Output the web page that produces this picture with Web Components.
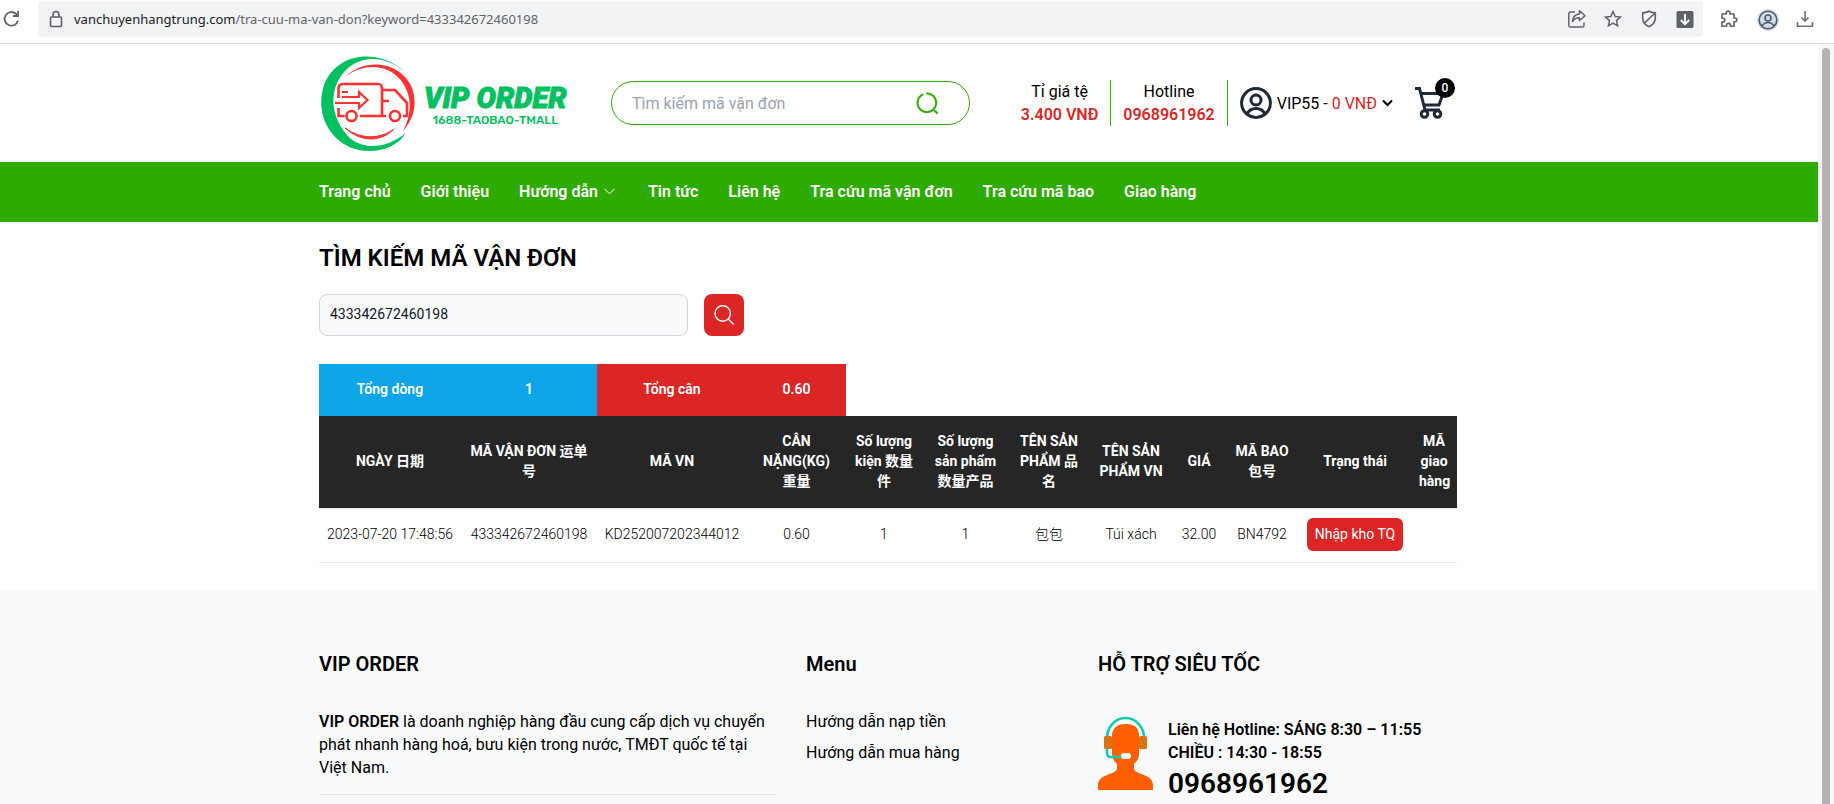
<!DOCTYPE html>
<html lang="vi">
<head>
<meta charset="utf-8">
<title>Tra cứu mã vận đơn - VIP ORDER</title>
<style>
html,body{margin:0;height:100%}
body{font-family:Roboto,"Noto Sans CJK SC",sans-serif;font-size:16px;line-height:23px;font-weight:400;color:#000;background:#fff;overflow:hidden;
--green:#2eab00;--red:#dc2626;--sky:#0ea5e9;--dark:#262626}
</style>
</head>
<body>
<browser-window>
  <browser-bar slot="bar"></browser-bar>
  <site-header></site-header>
  <site-nav></site-nav>
  <tracking-page></tracking-page>
  <site-footer></site-footer>
</browser-window>
<script>
const define = (name, html) => {
  const t = document.createElement('template');
  t.innerHTML = '<style>*,:host{box-sizing:border-box}button,input{font:inherit}:host{display:block}svg{display:block;flex:none}</style>' + html;
  customElements.define(name, class extends HTMLElement {
    constructor() {
      super();
      this.attachShadow({mode: 'open'}).append(t.content.cloneNode(true));
    }
  });
};

/* Window frame: toolbar on top, scrolling page with its scrollbar below */
define('browser-window', `
<style>
:host{display:flex;flex-direction:column;height:100vh;overflow:hidden}
.view{flex:1;min-height:0;display:flex}
.page{flex:1;min-width:0;overflow:hidden;display:flex;flex-direction:column}
::slotted(site-footer){flex:1 0 auto}
.scroll{width:16px;flex:none;background:#f8f8f8;padding:4px 4px 0}
.thumb{height:100%;border-radius:4px 4px 0 0;background:#b4b4b4}
</style>
<slot name="bar"></slot>
<div class="view"><div class="page"><slot></slot></div><div class="scroll"><div class="thumb"></div></div></div>`);

/* Centred content column */
define('page-container', `
<style>:host{padding-right:42px}div{max-width:1138px;margin:0 auto}</style>
<div><slot></slot></div>`);

define('browser-bar', `
<style>
:host{display:flex;align-items:center;height:44px;padding:0 19px 6px 0;border-bottom:1px solid #d9dadc;background:#fff;color:#5f6368;flex:none}
button{border:0;background:none;padding:0;color:inherit;display:grid;place-items:center;width:20px;height:20px}
.reload{width:20px;margin-right:18px}
.url{flex:1;height:36px;margin-top:1px;display:flex;align-items:center;background:#f1f3f5;border-radius:4px;padding:0 8px;gap:8px;margin-right:16px}
.lock{width:20px;display:grid;place-items:center}
.text{flex:1;white-space:nowrap;font-family:"Noto Sans",sans-serif;font-size:13px}
.text b{font-weight:400;color:#202124}
.acts{display:flex;gap:16px}
.ext{display:flex;gap:18px}
</style>
<button class="reload" aria-label="Reload"><svg width="20" height="20" viewBox="-2 0 20 20" fill="none" stroke="#5f6368" stroke-width="1.800"><path d="M16 11.500A6.800 6.800 0 1 1 14.200 5l1.600 1.700"/><path d="M16 2v5h-5"/></svg></button>
<div class="url">
  <span class="lock"><svg width="14" height="18" viewBox="0 0 14 18" fill="none" stroke="#5f6368" stroke-width="1.600"><rect x="1.500" y="7" width="11" height="9.500" rx="1.200"/><path d="M4 7V4.500a3 3 0 0 1 6 0V7"/></svg></span>
  <span class="text"><b>vanchuyenhangtrung.com</b>/tra-cuu-ma-van-don?keyword=433342672460198</span>
  <div class="acts">
    <button aria-label="Share"><svg width="20" height="20" viewBox="0 0 20 20" fill="none" stroke="#5f6368" stroke-width="1.500" stroke-linejoin="round"><path d="M8 3H3.400a1.600 1.600 0 0 0-1.600 1.600v11.800A1.600 1.600 0 0 0 3.400 18h12a1.600 1.600 0 0 0 1.600-1.600V13.500"/><path d="M12.500 1.800 18 6.800l-5.500 4.700V8.700c-3.500 0-5.500 1.300-7 3.800.3-4 2.700-7 7-7.400z"/></svg></button>
    <button aria-label="Bookmark"><svg width="20" height="20" viewBox="0 0 20 20" fill="none" stroke="#5f6368" stroke-width="1.500"><path d="m10 2.600 2.200 4.900 5.200.6-3.900 3.500 1.100 5.200L10 14.200l-4.600 2.600 1.100-5.200L2.600 8.100l5.200-.6z"/></svg></button>
    <button aria-label="Shield"><svg width="20" height="20" viewBox="0 0 20 20" fill="none" stroke="#5f6368" stroke-width="1.600"><path d="M10 2.200c2 1.200 4 1.600 6.300 1.700V9c0 4.200-2.600 7-6.300 8.700C6.300 16 3.700 13.200 3.700 9V3.900C6 3.800 8 3.400 10 2.200zM15.500 4.500l-10 9.500"/></svg></button>
    <button aria-label="Save page"><svg width="20" height="20" viewBox="0 0 20 20"><rect x="1.500" y="2" width="17" height="17" rx="1.500" fill="#5f6368"/><path d="M10 5v10M5.800 11l4.200 4.200 4.200-4.200" fill="none" stroke="#fff" stroke-width="1.800"/></svg></button>
  </div>
</div>
<div class="ext">
  <button aria-label="Extensions"><svg width="20" height="20" viewBox="0 0 20 20" fill="none" stroke="#5f6368" stroke-width="1.600" stroke-linejoin="round"><path d="M3 5h4.300V4a1.800 1.800 0 0 1 3.700 0v1h4v4h1a1.800 1.800 0 0 1 0 3.700h-1v4.500h-3.600v-.9a1.900 1.900 0 0 0-3.800 0v.9H3v-4.100h.9a1.900 1.900 0 0 0 0-3.800H3z"/></svg></button>
  <button aria-label="Profile"><svg width="22" height="22" viewBox="0 0 22 22"><circle cx="11" cy="11" r="11" fill="#d5dbe3"/><g fill="none" stroke="#4a5a74" stroke-width="1.600"><circle cx="11" cy="11" r="8.800"/><circle cx="11" cy="9" r="3"/><path d="M5 17c1.500-2.500 3.500-3.500 6-3.500s4.500 1 6 3.500"/></g></svg></button>
  <button aria-label="Downloads"><svg width="20" height="20" viewBox="0 0 20 20" fill="none" stroke="#6f7275" stroke-width="1.600"><path d="M10 2v10M6.500 8.500 10 12l3.500-3.500M2.500 13v4.200h15V13"/></svg></button>
</div>`);

define('site-logo', `
<style>
a{display:flex;align-items:center;gap:8px;text-decoration:none;color:#00c060}
span{display:block;text-align:center;white-space:nowrap}
.name{font:italic 900 29px/26px Roboto,sans-serif;-webkit-text-stroke:1px #00c060}
.sub{font:500 12px/18px Rubik,Roboto,sans-serif}
.words{padding-top:8px}
</style>
<a href="#" aria-label="VIP ORDER"><svg width="96" height="98" viewBox="0 0 96 98">
<path d="M85 18C58-7 16-1 4 31-7 65 16 97 49 97c16 0 29-6 37-18-20 16-45 18-59 2C9 60 9 33 26 16c15-15 39-15 59 2z" fill="#00c060"/>
<path d="M26 22C48 2 82 9 92 34c6 17 1 32-9 43 7-13 9-27 4-40C78 13 50 5 26 22z" fill="#ff3131"/>
<path d="M25 74c17 15 36 14 49 1-14 10-32 11-49-1z" fill="#ff3131" stroke="#ff3131"/>
<g fill="none" stroke="#ff3131" stroke-width="2.600">
<path d="M18.500 44V34a4 4 0 0 1 4-4H58a4 4 0 0 1 4 4v28H40M18.500 54v8h6M62 36h13l12 13v13h-4M66 62h-4M62 47h7"/>
<circle cx="31.500" cy="62" r="5"/><circle cx="75" cy="62" r="5"/>
<path d="M22 38h6M22 43h17v-5l8.500 8-8.500 8v-5H15" stroke-width="2.200"/></g>
</svg>
<div class="words"><span class="name">VIP ORDER</span><span class="sub">1688-TAOBAO-TMALL</span></div></a>`);

define('info-item', `
<style>
:host{height:46px;text-align:center;white-space:nowrap;border-right:1px solid var(--green);padding:0 12px}
b{display:block;font-weight:600;color:var(--red)}
</style>
<slot></slot><b><slot name="value"></slot></b>`);

define('site-header', `
<style>
:host{flex:none}
.row{display:flex;align-items:center;height:118px}
site-logo{width:291px;flex:none;margin-left:1px}
form{width:359px;height:44px;border:1px solid var(--green);border-radius:22px;display:flex;align-items:center;padding:0 30px 0 20px;margin:0}
input{flex:1;min-width:0;border:0;outline:0;background:none;padding:0;color:#000}
input::placeholder{color:#9ca3af;opacity:1}
button{border:0;background:none;padding:0;color:#000}
.info{display:flex;margin-left:auto}
.user{display:flex;align-items:center;gap:5px;margin-left:12px;white-space:nowrap}
.user i{font-style:normal;color:var(--red)}
.cart{position:relative;margin:0 12px 0 22px}
.badge{position:absolute;left:20px;top:-8px;width:20px;height:20px;border-radius:50%;background:#000;color:#fff;font-size:12px;line-height:20px;text-align:center;font-weight:500}
</style>
<page-container><div class="row">
<site-logo></site-logo>
<form onsubmit="return false"><input type="text" aria-label="Tìm kiếm mã vận đơn" placeholder="Tìm kiếm mã vận đơn">
<button aria-label="Tìm kiếm"><svg width="23" height="24" viewBox="0 0 23 24" fill="none" stroke="#2eab00" stroke-width="2" stroke-linecap="round"><path d="M11 2.500a9.300 9.300 0 1 1-4.500 1.100M19 20l2 2"/></svg></button></form>
<div class="info"><info-item>Tỉ giá tệ<span slot="value">3.400 VNĐ</span></info-item><info-item>Hotline<span slot="value">0968961962</span></info-item></div>
<button class="user"><svg width="32" height="32" viewBox="0 0 32 32" fill="none" stroke="#1f2937" stroke-width="3"><circle cx="16" cy="16" r="14.400"/><circle cx="16" cy="13" r="5"/><path d="M7 27c2-4 5-5.500 9-5.500s7 1.500 9 5.500"/></svg><span>VIP55 - <i>0 VNĐ</i></span><svg width="11" height="8" viewBox="0 0 11 8" fill="none" stroke="#000" stroke-width="2"><path d="m1 1.500 4.500 4.500L10 1.500"/></svg></button>
<button class="cart" aria-label="Giỏ hàng"><svg width="30" height="34" viewBox="0 0 30 34" fill="none" stroke="#1f2937" stroke-width="3"><path d="M0 2.500h4.500L10 24M6 7.500h22l-4 11.500H8M10 24h15"/><circle cx="9.500" cy="28" r="3.300"/><circle cx="22.500" cy="28" r="3.300"/></svg><span class="badge">0</span></button>
</div></page-container>`);

define('site-nav', `
<style>
:host{background:var(--green);flex:none}
nav{display:flex;gap:30px;height:60px;padding-bottom:2px;align-items:center}
a{color:#fff;text-decoration:none;font-weight:600;white-space:nowrap;display:flex;align-items:center;gap:6px}
</style>
<page-container><nav>
<a href="#">Trang chủ</a><a href="#">Giới thiệu</a><a href="#">Hướng dẫn<svg width="14" height="7" viewBox="0 0 14 7" fill="none" stroke="#fff"><path d="m.5.800 5 5 5-5"/></svg></a><a href="#">Tin tức</a><a href="#">Liên hệ</a><a href="#">Tra cứu mã vận đơn</a><a href="#">Tra cứu mã bao</a><a href="#">Giao hàng</a>
</nav></page-container>`);

define('tracking-page', `
<style>
:host{padding:20px 0 27px;flex:none}
h1{margin:0 0 20px;font-size:24px;line-height:32px;font-weight:600}
form{display:flex;gap:16px;margin:0 0 28px}
input{width:369px;height:42px;border:1px solid #d1d5db;border-radius:8px;background:#f9fafb;padding:0 10px 2px;font-size:14px;color:#111827;outline:0}
form button{width:40px;height:42px;border:0;border-radius:8px;background:var(--red);padding:0;display:grid;place-items:center}
table{width:100%;table-layout:fixed;border-collapse:collapse;font-size:14px;line-height:20px;text-align:center}
th,td{padding:0 8px 2px}
tr.sum{height:52px;color:#fff}
.sum th,.sum td{font-weight:600}
.sky{background:var(--sky)}.red{background:var(--red)}
tr.head{height:92px;background:var(--dark);color:#fff}
.head th{font-weight:700}
.data td{height:54px;padding:0 0 2px;font-weight:300;border-top:1px solid #e5e7eb;border-bottom:1px solid #e5e7eb}
.status{display:inline-block;border:0;border-radius:6px;background:var(--red);color:#fff;padding:0 8px;height:33px;font-size:14px;font-weight:400;white-space:nowrap}
</style>
<page-container>
<h1>TÌM KIẾM MÃ VẬN ĐƠN</h1>
<form onsubmit="return false"><input type="text" value="433342672460198" aria-label="Mã vận đơn"><button aria-label="Tìm kiếm"><svg width="20" height="20" viewBox="0 0 20 20" fill="none" stroke="#fff" stroke-width="1.400"><circle cx="8.700" cy="8.500" r="7.700"/><path d="m14.200 14 5.500 5.500"/></svg></button></form>
<table>
<colgroup><col style="width:142px"><col style="width:136px"><col style="width:150px"><col style="width:99px"><col style="width:76px"><col style="width:87px"><col style="width:80px"><col style="width:84px"><col style="width:52px"><col style="width:74px"><col style="width:112px"><col style="width:46px"></colgroup>
<thead>
<tr class="sum"><th class="sky">Tổng dòng</th><td class="sky">1</td><th class="red">Tổng cân</th><td class="red">0.60</td><td colspan="8"></td></tr>
<tr class="head"><th>NGÀY 日期</th><th>MÃ VẬN ĐƠN 运单号</th><th>MÃ VN</th><th>CÂN NẶNG(KG) 重量</th><th>Số lượng kiện 数量件</th><th>Số lượng sản phẩm 数量产品</th><th>TÊN SẢN PHẨM 品名</th><th>TÊN SẢN PHẨM VN</th><th>GIÁ</th><th>MÃ BAO 包号</th><th>Trạng thái</th><th>MÃ giao hàng</th></tr>
</thead>
<tbody><tr class="data"><td>2023-07-20 17:48:56</td><td>433342672460198</td><td>KD252007202344012</td><td>0.60</td><td>1</td><td>1</td><td>包包</td><td>Túi xách</td><td>32.00</td><td>BN4792</td><td><button class="status">Nhập kho TQ</button></td><td></td></tr></tbody>
</table>
</page-container>`);

define('footer-column', `
<style>h2{margin:0 0 32px;font-size:20px;line-height:28px;font-weight:600}</style>
<h2><slot name="title"></slot></h2><slot></slot>`);

define('site-footer', `
<style>
:host{background:#f9fafb;padding-top:60px}
.grid{display:grid;grid-template-columns:457fr 262fr 359fr;gap:30px}
p{margin:0;padding-bottom:15px;border-bottom:1px solid #e5e7eb}
p b,strong{font-weight:600}
.links{display:flex;flex-direction:column;gap:8px}
.links a{color:inherit;text-decoration:none}
.help{display:flex;gap:15px;padding-top:6px}
.help strong{display:block;padding-top:2px}
.tel{display:block;color:inherit;text-decoration:none;font-size:28px;line-height:40px;font-weight:600}
</style>
<page-container><div class="grid">
<footer-column><span slot="title">VIP ORDER</span><p><b>VIP ORDER</b> là doanh nghiệp hàng đầu cung cấp dịch vụ chuyển phát nhanh hàng hoá, bưu kiện trong nước, TMĐT quốc tế tại Việt Nam.</p></footer-column>
<footer-column><span slot="title">Menu</span><div class="links"><a href="#">Hướng dẫn nạp tiền</a><a href="#">Hướng dẫn mua hàng</a></div></footer-column>
<footer-column><span slot="title">HỖ TRỢ SIÊU TỐC</span><div class="help">
<svg width="55" height="74" viewBox="0 0 55 74"><path d="M14 20C14 12 19 8 28 8s13 4 13 12v18c0 5-2 7-5 10v5c2 6 19 5 19 16v5H0v-5c0-11 17-10 19-16v-5c-3-3-5-6-5-10z" fill="#ff5f00"/><path d="M9 22a18.500 20 0 0 1 37 0M9 32v5q0 4 4 4h12" fill="none" stroke="#14cbac" stroke-width="2.600"/><rect x="6" y="20" width="8" height="13" rx="1.500" fill="#d87416"/><rect x="41" y="20" width="8" height="13" rx="1.500" fill="#d87416"/><rect x="23" y="37" width="10" height="6" rx="3" fill="#fff"/></svg>
<div><strong>Liên hệ Hotline: SÁNG 8:30 – 11:55<br>CHIỀU : 14:30 - 18:55</strong><a class="tel" href="#">0968961962</a></div></div></footer-column>
</div></page-container>`);
</script>
</body>
</html>
